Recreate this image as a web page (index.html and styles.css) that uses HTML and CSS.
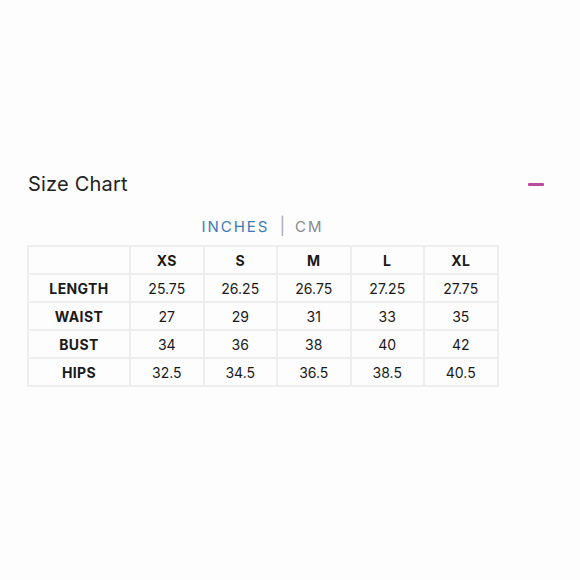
FILE: index.html
```html
<!DOCTYPE html>
<html>
<head>
<meta charset="utf-8">
<link rel="stylesheet" href="styles.css">
</head>
<body>
<div class="page">
  <div class="header">
    <h2 class="title">Size Chart</h2>
    <span class="minus"></span>
  </div>
  <div class="units">
    <span class="unit active">INCHES</span>
    <span class="sep">|</span>
    <span class="unit">CM</span>
  </div>
  <table class="chart">
    <tr class="head"><th></th><th>XS</th><th>S</th><th>M</th><th>L</th><th>XL</th></tr>
    <tr><th>LENGTH</th><td>25.75</td><td>26.25</td><td>26.75</td><td>27.25</td><td>27.75</td></tr>
    <tr><th>WAIST</th><td>27</td><td>29</td><td>31</td><td>33</td><td>35</td></tr>
    <tr><th>BUST</th><td>34</td><td>36</td><td>38</td><td>40</td><td>42</td></tr>
    <tr><th>HIPS</th><td>32.5</td><td>34.5</td><td>36.5</td><td>38.5</td><td>40.5</td></tr>
  </table>
</div>
</body>
</html>
```

FILE: styles.css
```css
html, body {
  margin: 0;
  padding: 0;
  background: #fdfdfd;
}
.page {
  width: 580px;
  height: 580px;
  padding-top: 170px;
  box-sizing: border-box;
  font-family: Inter, "Liberation Sans", sans-serif;
  color: #1c1c1c;
}
.header {
  display: flex;
  align-items: center;
  justify-content: space-between;
  padding: 0 36px 0 28px;
  height: 28px;
}
.title {
  margin: 0;
  font-size: 20px;
  font-weight: 400;
  letter-spacing: 0.2px;
  color: #222;
}
.minus {
  width: 16px;
  height: 3px;
  background: #b84c9e;
  border-radius: 1px;
}
.units {
  display: flex;
  justify-content: center;
  align-items: center;
  gap: 10px;
  margin-top: 17px;
  padding-right: 55px;
  height: 22px;
  font-size: 15px;
  letter-spacing: 2px;
}
.unit { color: #8a8a8a; }
.unit.active { color: #3a7bb5; }
.sep { color: #aaa; letter-spacing: 0; font-size: 17px; }
.chart {
  margin: 8px 0 0 27px;
  border-collapse: collapse;
  font-size: 14px;
  border: 1px solid #e6e6e6;
}
.chart th, .chart td {
  border: 2px solid #eeeeee;
  text-align: center;
  height: 26px;
  padding: 0;
  width: 71.5px;
  color: #1a1a1a;
}
.chart tr.head th { height: 26px; }
.chart th:first-child { width: 100px; }
.chart th { font-weight: 700; letter-spacing: 0.4px; }
.chart td { font-weight: 400; }
```
